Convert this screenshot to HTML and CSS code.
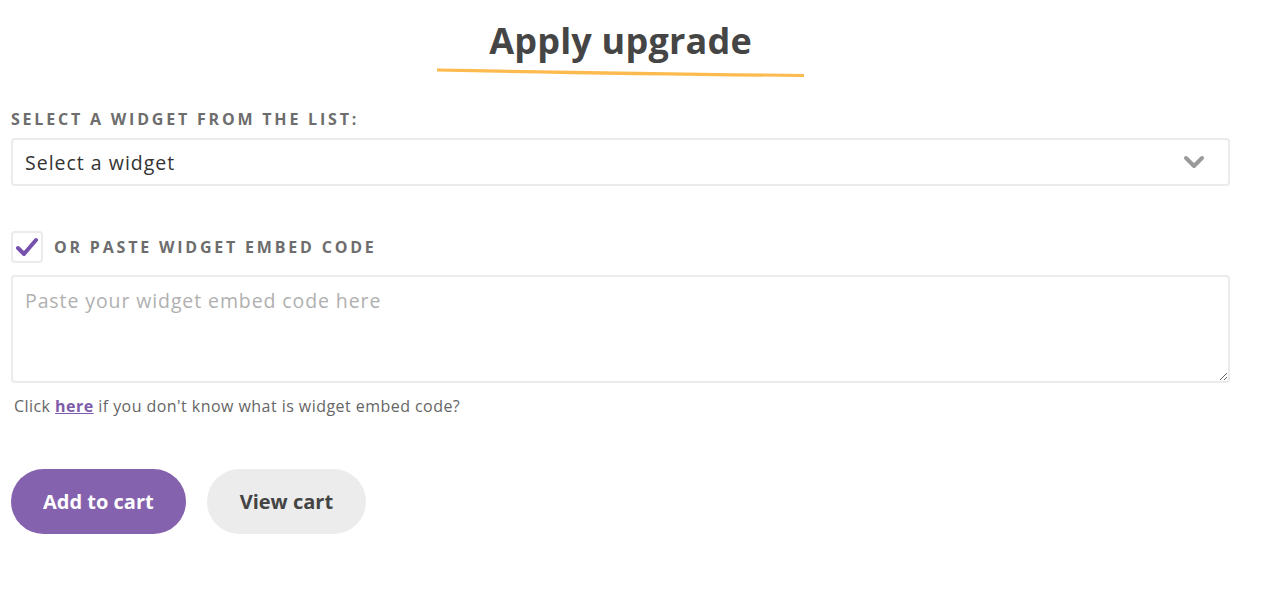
FILE: index.html
```html
<!DOCTYPE html>
<html lang="en">
<head>
  <meta charset="UTF-8" />
  <meta name="viewport" content="width=device-width, initial-scale=1.0"/>
  <title>Apply upgrade</title>
  <link rel="stylesheet" href="styles.css">
</head>
<body>
  <div class="upgrade">
    <div class="title-wrap">
      <h1 class="title">Apply upgrade</h1>
      <svg class="title-line" width="370" height="12" viewBox="0 0 370 12">
        <path d="M1 2.5 C 120 4.5, 250 6.5, 368 8 L 368 11 C 250 10, 120 8, 1 5.5 Z" fill="#fdbb4f"/>
      </svg>
    </div>

    <label class="field-label" for="widget">Select a widget from the list:</label>
    <div class="select-box">
      <select id="widget">
        <option>Select a widget</option>
      </select>
      <svg class="chevron" width="22" height="14" viewBox="0 0 22 14">
        <path d="M3 3 L11 11 L19 3" fill="none" stroke="#9a9a9a" stroke-width="4" stroke-linecap="round" stroke-linejoin="round"/>
      </svg>
    </div>

    <div class="embed-row">
      <span class="checkbox">
        <svg width="24" height="20" viewBox="0 0 24 20">
          <path d="M3 11 L9 17 L21 3" fill="none" stroke="#7752ad" stroke-width="4" stroke-linecap="round" stroke-linejoin="round"/>
        </svg>
      </span>
      <span class="field-label inline">Or paste widget embed code</span>
    </div>

    <textarea class="embed-code" placeholder="Paste your widget embed code here"></textarea>
    <p class="help">Click <a href="#">here</a> if you don't know what is widget embed code?</p>

    <div class="actions">
      <button class="btn btn-primary">Add to cart</button>
      <button class="btn btn-light">View cart</button>
    </div>
  </div>
</body>
</html>
```

FILE: styles.css
```css
body {
  font-family: "Open Sans", sans-serif;
  margin: 0;
  padding: 0;
  background: #fff;
  color: #444;
}

.upgrade {
  width: 1219px;
  padding: 0 0 0 11px;
}

.title-wrap {
  display: flex;
  flex-direction: column;
  align-items: center;
  padding-top: 17px;
}

.title {
  margin: 0;
  font-size: 36px;
  font-weight: 700;
  letter-spacing: 0.2px;
  color: #454545;
  line-height: 48px;
}

.title-line {
  display: block;
  margin-top: 1px;
}

.field-label {
  display: block;
  margin-top: 31px;
  font-size: 16px;
  font-weight: 700;
  letter-spacing: 2.8px;
  text-transform: uppercase;
  color: #6d6d6d;
  line-height: 20px;
}

.field-label.inline {
  display: inline;
  margin: 0;
}

.select-box {
  position: relative;
  margin-top: 9px;
}

.select-box select {
  width: 100%;
  height: 48px;
  box-sizing: border-box;
  border: 2px solid #ebebeb;
  border-radius: 4px;
  padding: 0 12px;
  font-family: inherit;
  font-size: 19.5px;
  letter-spacing: 1px;
  color: #333;
  background: #fff;
  -webkit-appearance: none;
  appearance: none;
}

.chevron {
  position: absolute;
  right: 25px;
  top: 17px;
}

.embed-row {
  display: flex;
  align-items: center;
  gap: 11px;
  margin-top: 45px;
}

.checkbox {
  width: 32px;
  height: 32px;
  box-sizing: border-box;
  border: 2px solid #ebebeb;
  border-radius: 4px;
  display: flex;
  align-items: center;
  justify-content: center;
}

.embed-code {
  display: block;
  width: 100%;
  height: 108px;
  box-sizing: border-box;
  margin-top: 12px;
  border: 2px solid #ebebeb;
  border-radius: 4px;
  padding: 10px 12px;
  font-family: inherit;
  font-size: 19.5px;
  letter-spacing: 0.9px;
  color: #333;
}

.embed-code::placeholder {
  color: #b0b0b0;
}

.help {
  margin: 13px 0 0 3px;
  font-size: 16px;
  letter-spacing: 0.45px;
  color: #666;
  line-height: 20px;
}

.help a {
  color: #7e5ca9;
  font-weight: 700;
}

.actions {
  display: flex;
  gap: 21px;
  margin-top: 53px;
}

.btn {
  height: 65px;
  border: none;
  border-radius: 33px;
  padding: 0 32px;
  font-family: inherit;
  font-size: 20px;
  font-weight: 700;
  cursor: pointer;
}

.btn-primary {
  background: #8562ad;
  color: #fff;
}

.btn-light {
  background: #ececec;
  color: #444;
  padding: 0 33px;
}
```
